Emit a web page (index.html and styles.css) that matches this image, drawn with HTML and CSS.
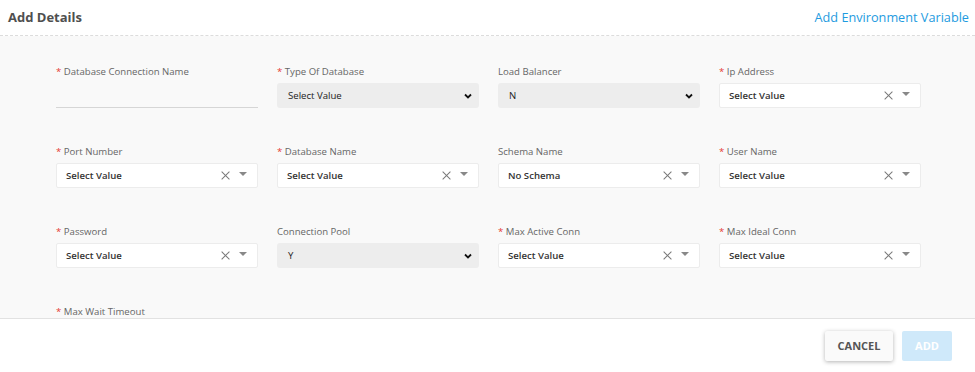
FILE: index.html
```html
<!DOCTYPE html>
<html lang="en">
<head>
  <meta charset="UTF-8">
  <title>Add Details</title>
  <link rel="stylesheet" href="styles.css">
</head>
<body>
  <div class="modal">
    <div class="head">
      <h1>Add Details</h1>
      <a class="env-link">Add Environment Variable</a>
    </div>

    <div class="content">
      <div class="form-grid">
        <div class="field">
          <label><span class="req">*</span> Database Connection Name</label>
          <div class="line-input"></div>
        </div>
        <div class="field">
          <label><span class="req">*</span> Type Of Database</label>
          <div class="native">Select Value<svg viewBox="0 0 10 10"><path d="M2 3.5 5 6.5 8 3.5"/></svg></div>
        </div>
        <div class="field">
          <label>Load Balancer</label>
          <div class="native">N<svg viewBox="0 0 10 10"><path d="M2 3.5 5 6.5 8 3.5"/></svg></div>
        </div>
        <div class="field">
          <label><span class="req">*</span> Ip Address</label>
          <div class="picker"><span>Select Value</span><i class="clear"></i><i class="caret"></i></div>
        </div>

        <div class="field">
          <label><span class="req">*</span> Port Number</label>
          <div class="picker"><span>Select Value</span><i class="clear"></i><i class="caret"></i></div>
        </div>
        <div class="field">
          <label><span class="req">*</span> Database Name</label>
          <div class="picker"><span>Select Value</span><i class="clear"></i><i class="caret"></i></div>
        </div>
        <div class="field">
          <label>Schema Name</label>
          <div class="picker"><span>No Schema</span><i class="clear"></i><i class="caret"></i></div>
        </div>
        <div class="field">
          <label><span class="req">*</span> User Name</label>
          <div class="picker"><span>Select Value</span><i class="clear"></i><i class="caret"></i></div>
        </div>

        <div class="field">
          <label><span class="req">*</span> Password</label>
          <div class="picker"><span>Select Value</span><i class="clear"></i><i class="caret"></i></div>
        </div>
        <div class="field">
          <label>Connection Pool</label>
          <div class="native">Y<svg viewBox="0 0 10 10"><path d="M2 3.5 5 6.5 8 3.5"/></svg></div>
        </div>
        <div class="field">
          <label><span class="req">*</span> Max Active Conn</label>
          <div class="picker"><span>Select Value</span><i class="clear"></i><i class="caret"></i></div>
        </div>
        <div class="field">
          <label><span class="req">*</span> Max Ideal Conn</label>
          <div class="picker"><span>Select Value</span><i class="clear"></i><i class="caret"></i></div>
        </div>

        <div class="field">
          <label><span class="req">*</span> Max Wait Timeout</label>
        </div>
      </div>
    </div>

    <div class="foot">
      <button class="btn-cancel">CANCEL</button>
      <button class="btn-add" disabled>ADD</button>
    </div>
  </div>
</body>
</html>
```

FILE: styles.css
```css
body {
  margin: 0;
  background: #fff;
  font-family: "Open Sans", "Noto Sans", sans-serif;
  color: #333;
}
.modal {
  width: 975px;
  height: 372px;
  display: flex;
  flex-direction: column;
  overflow: hidden;
}
.head {
  height: 33px;
  flex: none;
  display: flex;
  align-items: center;
  justify-content: space-between;
  padding: 0 6px 2px 8px;
  border-bottom: 1px dashed #dcdcdc;
}
.head h1 {
  margin: 0;
  font-size: 13px;
  font-weight: 700;
  color: #4f4f4f;
}
.env-link {
  font-size: 12.7px;
  color: #1e9be0;
  cursor: pointer;
}
.content {
  flex: 1;
  overflow: hidden;
  background: #f9f9f9;
  padding: 30px 0 0 56px;
}
.form-grid {
  display: grid;
  grid-template-columns: repeat(4, 202px);
  column-gap: 19px;
  row-gap: 38px;
}
.field label {
  display: block;
  height: 12px;
  line-height: 12px;
  margin-bottom: 5px;
  font-size: 9.6px;
  color: #666;
  white-space: nowrap;
}
.req {
  color: #e53935;
}
.line-input {
  height: 24px;
  border-bottom: 1px solid #d6d6d6;
}
.native {
  height: 25px;
  box-sizing: border-box;
  display: flex;
  align-items: center;
  justify-content: space-between;
  padding: 0 6px 0 11px;
  background: #ededed;
  border-radius: 3px;
  font-size: 9.6px;
  color: #222;
}
.native svg {
  width: 10px;
  height: 10px;
  fill: none;
  stroke: #111;
  stroke-width: 1.8;
}
.picker {
  height: 25px;
  box-sizing: border-box;
  display: flex;
  align-items: center;
  padding: 0 10px 0 9px;
  background: #fff;
  border: 1px solid #ececec;
  border-radius: 2px;
  font-size: 9.6px;
  font-weight: 600;
  color: #333;
}
.picker span {
  flex: 1;
}
.clear {
  position: relative;
  width: 9px;
  height: 9px;
  margin-right: 9px;
}
.clear::before,
.clear::after {
  content: "";
  position: absolute;
  left: 4px;
  top: -1px;
  width: 1.2px;
  height: 11px;
  background: #777;
  transform: rotate(45deg);
}
.clear::after {
  transform: rotate(-45deg);
}
.caret {
  width: 0;
  height: 0;
  margin-top: -3px;
  border-left: 4px solid transparent;
  border-right: 4px solid transparent;
  border-top: 4px solid #888;
}
.foot {
  height: 53px;
  flex: none;
  display: flex;
  align-items: center;
  justify-content: flex-end;
  gap: 9px;
  padding: 0 23px 0 0;
  border-top: 1px solid #e2e2e2;
}
.foot button {
  height: 30px;
  border: none;
  border-radius: 2px;
  font-family: "Open Sans", sans-serif;
  font-size: 11px;
  font-weight: 700;
  cursor: pointer;
}
.btn-cancel {
  width: 68px;
  background: #fafafa;
  color: #555;
  box-shadow: 0 1px 4px rgba(0, 0, 0, 0.3);
}
.btn-add {
  width: 50px;
  background: #cfe9fa;
  color: #fff;
}
```
